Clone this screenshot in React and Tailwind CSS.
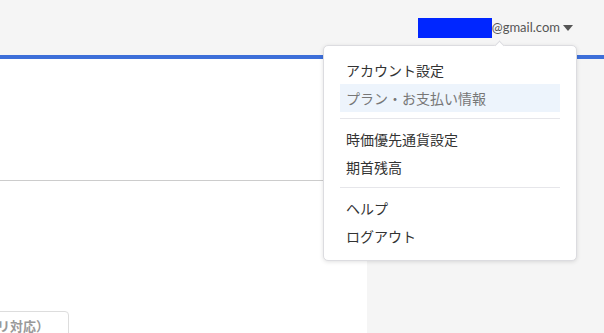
import React from "react";

const groups = [
  [
    { label: "アカウント設定" },
    { label: "プラン・お支払い情報", active: true },
  ],
  [{ label: "時価優先通貨設定" }, { label: "期首残高" }],
  [{ label: "ヘルプ" }, { label: "ログアウト" }],
];

const App = () => {
  return (
    <div
      className="relative w-[604px] h-[333px] overflow-hidden bg-white"
      style={{ fontFamily: "Lato, 'Noto Sans CJK JP', sans-serif" }}
    >
      <header className="h-[55px] bg-[#f5f5f5] flex items-center justify-end pr-[31px]">
        <div className="flex items-center text-[13px] text-[#555]">
          <span className="w-[74px] h-[20px] bg-[#0026ff]" />
          <span>@gmail.com</span>
          <svg className="ml-[3px]" width="10" height="6" viewBox="0 0 10 6">
            <path d="M0 0h10L5 6z" fill="#555" />
          </svg>
        </div>
      </header>
      <div className="h-[4px] bg-[#3d6fd9]" />

      <div className="flex h-[274px]">
        <main className="w-[367px] bg-white flex flex-col">
          <div className="h-[122px] shrink-0 border-b border-[#cccccc]" />
          <div className="shrink-0 mt-[130px] ml-[-120px] w-[189px] h-[30px] rounded-[4px] border border-[#dddddd] flex justify-end items-start pt-[8px] pr-[19px]">
            <span className="text-[13px] font-bold text-[#999] leading-none whitespace-nowrap">
              （アプリ対応）
            </span>
          </div>
        </main>
        <aside className="flex-1 bg-[#f5f5f5]" />
      </div>

      <div className="absolute left-[323px] top-[45px] w-[254px] h-[216px] bg-white rounded-[5px] border border-[#dcdce0] shadow-[0_1px_4px_rgba(0,0,0,0.12)] px-[16px] pt-[10px] pb-[11px]">
        <div className="absolute left-[172px] top-[-4px] w-[7px] h-[7px] rotate-45 bg-white border-l border-t border-[#dcdce0]" />
        {groups.map((g, gi) => (
          <div key={gi}>
            {gi > 0 && <div className="my-[6px] h-px bg-[#e6e6ea]" />}
            {g.map((item) => (
              <div
                key={item.label}
                className={
                  "h-[28px] flex items-center px-[6px] text-[14px] " +
                  (item.active ? "bg-[#edf4fc] text-[#777]" : "text-[#333]")
                }
              >
                {item.label}
              </div>
            ))}
          </div>
        ))}
      </div>
    </div>
  );
};

export default App;
